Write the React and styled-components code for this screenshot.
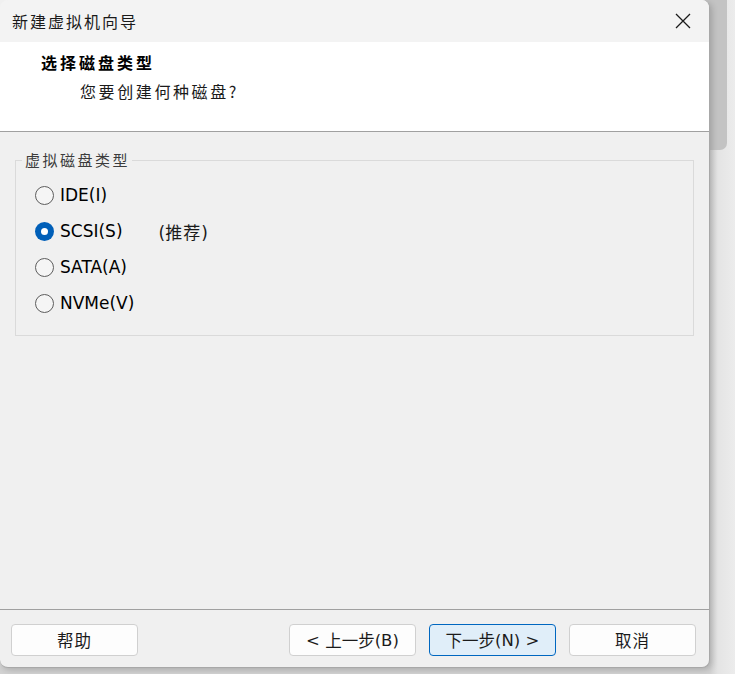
import React from "react";
import styled, { createGlobalStyle } from "styled-components";

const Global = createGlobalStyle`
  html, body { margin: 0; padding: 0; }
  body {
    background: #ececec;
    width: 735px;
    height: 674px;
    overflow: hidden;
    font-family: "DejaVu Sans", "Noto Sans CJK SC", sans-serif;
  }
`;

const Stage = styled.div`
  position: relative;
  width: 735px;
  height: 674px;
  background: linear-gradient(to right, #d2d2d2 710px, #e4e4e4 718px, #ececec 735px);
`;

const BackBlock = styled.div`
  position: absolute;
  left: 704px;
  top: 0;
  width: 23px;
  height: 150px;
  background: #c3c3c3;
  border-bottom-right-radius: 7px;
`;

const Window = styled.div`
  position: relative;
  width: 709px;
  height: 667px;
  background: #f0f0f0;
  border-right: 1px solid #a8a8a8;
  border-bottom: 1px solid #a8a8a8;
  border-radius: 0 8px 8px 8px;
  overflow: hidden;
  display: flex;
  flex-direction: column;
  box-shadow: 2px 2px 6px rgba(0, 0, 0, 0.18);
`;

const TitleBar = styled.div`
  height: 42px;
  flex: none;
  background: #f3f3f3;
  display: flex;
  align-items: center;
  justify-content: space-between;
  padding: 0 12px 0 12px;
  border-top-left-radius: 8px;
`;

const TitleText = styled.div`
  font-family: "Noto Sans CJK SC", sans-serif;
  font-size: 16px;
  letter-spacing: 2px;
  color: #1a1a1a;
  margin-top: -1px;
`;

const CloseBtn = styled.div`
  width: 20px;
  height: 20px;
  margin-right: 4px;
  display: flex;
  align-items: center;
  justify-content: center;
`;

const Header = styled.div`
  height: 90px;
  flex: none;
  background: #ffffff;
  border-bottom: 1px solid #a0a0a0;
  box-sizing: border-box;
  padding: 8px 0 0 41px;
`;

const HeaderTitle = styled.div`
  font-family: "Noto Sans CJK SC", sans-serif;
  font-weight: 700;
  font-size: 16px;
  letter-spacing: 3px;
  color: #000;
  line-height: 24px;
`;

const HeaderSub = styled.div`
  font-family: "Noto Sans CJK SC", sans-serif;
  font-size: 16px;
  letter-spacing: 2.6px;
  color: #1a1a1a;
  line-height: 24px;
  margin: 5px 0 0 39px;
`;

const Body = styled.div`
  flex: 1;
  padding: 18px 15px 0 15px;
  border-bottom: 1px solid #a0a0a0;
`;

const Group = styled.fieldset`
  margin: 0;
  padding: 7px 0 0 19px;
  border: 1px solid #dadada;
  height: 186px;
  box-sizing: border-box;
  display: flex;
  flex-direction: column;
`;

const Legend = styled.legend`
  font-family: "Noto Sans CJK SC", sans-serif;
  font-size: 15px;
  letter-spacing: 2.5px;
  color: #3c3c3c;
  padding: 0 2px 0 3px;
  margin-left: -13px;
  line-height: 20px;
`;

const RadioRow = styled.label`
  display: flex;
  align-items: center;
  height: 36px;
  font-family: "DejaVu Sans", "Noto Sans CJK SC", sans-serif;
  font-size: 17px;
  color: #000;
`;

const RadioCircle = styled.span`
  width: 19px;
  height: 19px;
  box-sizing: border-box;
  border-radius: 50%;
  border: ${(p) => (p.$checked ? "none" : "1px solid #5d5d5d")};
  background: ${(p) => (p.$checked ? "#005fb8" : "#f5f5f5")};
  display: flex;
  align-items: center;
  justify-content: center;
  margin-right: 6px;
  flex: none;
  &::after {
    content: "";
    display: ${(p) => (p.$checked ? "block" : "none")};
    width: 7px;
    height: 7px;
    border-radius: 50%;
    background: #fff;
  }
`;

const Note = styled.span`
  font-size: 17px;
  margin-left: 36px;
  color: #1a1a1a;
`;

const Footer = styled.div`
  height: 57px;
  flex: none;
  display: flex;
  align-items: flex-start;
  padding: 14px 13px 0 11px;
  box-sizing: border-box;
  gap: 13px;
`;

const Spacer = styled.div`
  flex: 1;
`;

const Button = styled.div`
  width: 127px;
  height: 32px;
  box-sizing: border-box;
  border-radius: 4px;
  border: 1px solid ${(p) => (p.$primary ? "#0067c0" : "#d0d0d0")};
  background: ${(p) => (p.$primary ? "#e0eef9" : "#fdfdfd")};
  display: flex;
  align-items: center;
  justify-content: center;
  font-family: "DejaVu Sans", "Noto Sans CJK SC", sans-serif;
  font-size: 16.5px;
  color: #1b1b1b;
  white-space: pre;
`;

const Cjk = styled.span`
  font-family: "Noto Sans CJK SC", sans-serif;
  letter-spacing: ${(p) => p.$ls || "0px"};
`;

const options = [
  { label: "IDE(I)" },
  { label: "SCSI(S)", checked: true, note: "推荐" },
  { label: "SATA(A)" },
  { label: "NVMe(V)" },
];

export default function App() {
  return (
    <>
      <Global />
      <Stage>
        <BackBlock />
        <Window>
          <TitleBar>
            <TitleText>新建虚拟机向导</TitleText>
            <CloseBtn>
              <svg width="16" height="16" viewBox="0 0 16 16">
                <path d="M1 1 L15 15 M15 1 L1 15" stroke="#1a1a1a" strokeWidth="1.3" fill="none" />
              </svg>
            </CloseBtn>
          </TitleBar>
          <Header>
            <HeaderTitle>选择磁盘类型</HeaderTitle>
            <HeaderSub>您要创建何种磁盘?</HeaderSub>
          </Header>
          <Body>
            <Group>
              <Legend>虚拟磁盘类型</Legend>
              {options.map((o) => (
                <RadioRow key={o.label}>
                  <RadioCircle $checked={o.checked} />
                  {o.label}
                  {o.note && (
                    <Note>
                      (<Cjk $ls="1px">{o.note}</Cjk>)
                    </Note>
                  )}
                </RadioRow>
              ))}
            </Group>
          </Body>
          <Footer>
            <Button><Cjk $ls="1px">帮助</Cjk></Button>
            <Spacer />
            <Button>{"< "}<Cjk>上一步</Cjk>(B)</Button>
            <Button $primary><Cjk>下一步</Cjk>{"(N) >"}</Button>
            <Button><Cjk $ls="1px">取消</Cjk></Button>
          </Footer>
        </Window>
      </Stage>
    </>
  );
}
